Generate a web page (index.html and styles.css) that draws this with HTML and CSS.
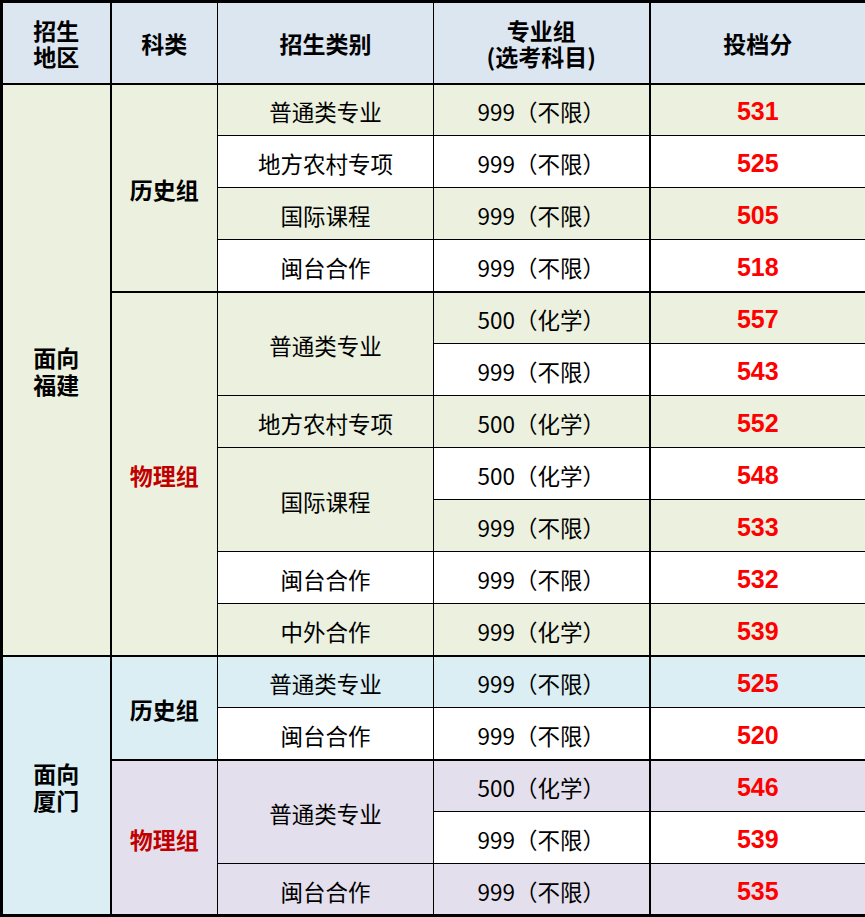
FILE: index.html
```html
<!DOCTYPE html>
<html lang="zh-CN">
<head>
<meta charset="utf-8">
<title>投档分</title>
<link rel="stylesheet" href="styles.css">
</head>
<body>
<table class="score-table">
  <colgroup>
    <col class="c1"><col class="c2"><col class="c3"><col class="c4"><col class="c5">
  </colgroup>
  <thead>
    <tr class="head-row">
      <th class="region-h">招生<br>地区</th>
      <th>科类</th>
      <th>招生类别</th>
      <th>专业组<br>(选考科目)</th>
      <th class="score-h">投档分</th>
    </tr>
  </thead>
  <tbody>
    <tr>
      <td class="region g tb" rowspan="11">面向<br>福建</td>
      <td class="subj g tb" rowspan="4">历史组</td>
      <td class="g">普通类专业</td><td class="g">999（不限）</td><td class="score g">531</td>
    </tr>
    <tr>
      <td>地方农村专项</td><td>999（不限）</td><td class="score">525</td>
    </tr>
    <tr>
      <td class="g">国际课程</td><td class="g">999（不限）</td><td class="score g">505</td>
    </tr>
    <tr>
      <td class="tb">闽台合作</td><td class="tb">999（不限）</td><td class="score tb">518</td>
    </tr>
    <tr>
      <td class="subj phys g tb" rowspan="7">物理组</td>
      <td class="g" rowspan="2">普通类专业</td><td class="g">500（化学）</td><td class="score g">557</td>
    </tr>
    <tr>
      <td>999（不限）</td><td class="score">543</td>
    </tr>
    <tr>
      <td class="g">地方农村专项</td><td class="g">500（化学）</td><td class="score g">552</td>
    </tr>
    <tr>
      <td class="g" rowspan="2">国际课程</td><td>500（化学）</td><td class="score">548</td>
    </tr>
    <tr>
      <td class="g">999（不限）</td><td class="score g">533</td>
    </tr>
    <tr>
      <td>闽台合作</td><td>999（不限）</td><td class="score">532</td>
    </tr>
    <tr>
      <td class="g tb">中外合作</td><td class="g tb">999（化学）</td><td class="score g tb">539</td>
    </tr>
    <tr>
      <td class="region b" rowspan="5">面向<br>厦门</td>
      <td class="subj b tb" rowspan="2">历史组</td>
      <td class="b">普通类专业</td><td class="b">999（不限）</td><td class="score b">525</td>
    </tr>
    <tr>
      <td class="tb">闽台合作</td><td class="tb">999（不限）</td><td class="score tb">520</td>
    </tr>
    <tr>
      <td class="subj phys p" rowspan="3">物理组</td>
      <td class="p" rowspan="2">普通类专业</td><td class="p">500（化学）</td><td class="score p">546</td>
    </tr>
    <tr>
      <td>999（不限）</td><td class="score">539</td>
    </tr>
    <tr>
      <td class="p">闽台合作</td><td class="p">999（不限）</td><td class="score p">535</td>
    </tr>
  </tbody>
</table>
</body>
</html>
```

FILE: styles.css
```css
html, body {
  margin: 0;
  padding: 0;
  background: #ffffff;
}

.score-table {
  border-collapse: collapse;
  table-layout: fixed;
  width: 865px;
  border: 3px solid #000;
  font-family: "Noto Sans CJK SC", "Liberation Sans", sans-serif;
  color: #000;
}

.c1 { width: 109px; }
.c2 { width: 107px; }
.c3 { width: 216px; }
.c4 { width: 216px; }
.c5 { width: 217px; }

.head-row { height: 82px; }
.score-table tbody tr { height: 52px; }

.score-table th,
.score-table td {
  border: 1px solid #000;
  padding: 0;
  text-align: center;
  vertical-align: middle;
  background: #ffffff;
}

.score-table th {
  background: #dce6f1;
  font-weight: 700;
  font-size: 23px;
  line-height: 26px;
  border-bottom: 2px solid #000;
}

.score-table td {
  font-size: 22.5px;
  line-height: 24px;
  font-weight: 400;
  padding-top: 3px;
}

.score-table .region-h,
.score-table .region {
  border-right: 2px solid #000;
}

.score-table .score-h,
.score-table .score {
  border-left: 2px solid #000;
}

.score-table .region {
  font-weight: 700;
  font-size: 23px;
  line-height: 27px;
}

.score-table .subj {
  font-weight: 700;
  font-size: 23px;
}

.score-table .phys {
  color: #c00000;
}

.score-table .score {
  font-family: "Liberation Sans", Arial, sans-serif;
  font-weight: 700;
  font-size: 25px;
  color: #ff0000;
}

.score-table .tb {
  border-bottom: 2px solid #000;
}

.score-table .g { background: #ebf1de; }
.score-table .b { background: #daeef3; }
.score-table .p { background: #e4dfec; }
```
